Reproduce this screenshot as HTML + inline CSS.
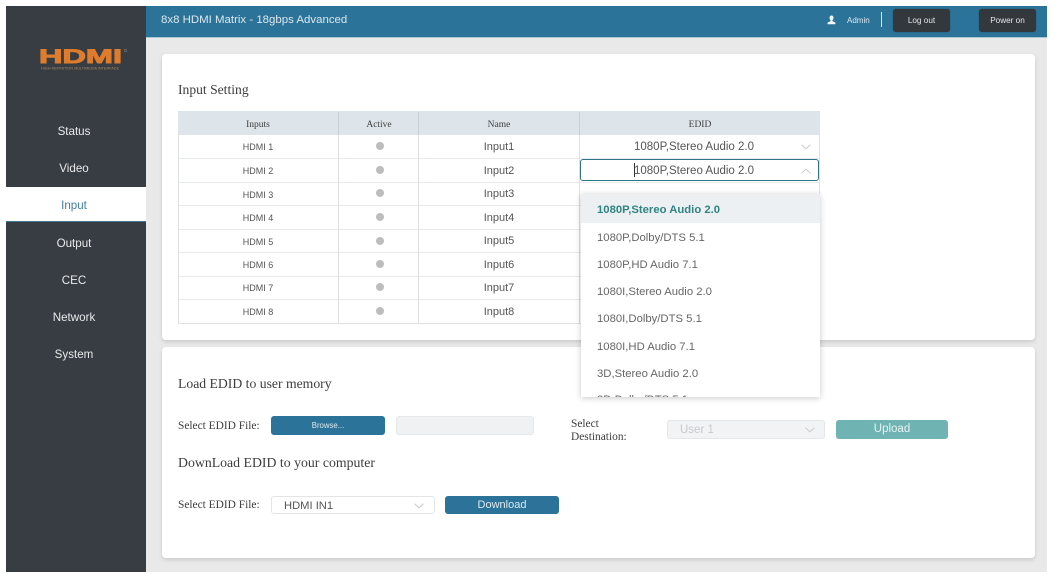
<!DOCTYPE html>
<html lang="en">
<head>
<meta charset="utf-8">
<title>8x8 HDMI Matrix</title>
<style>
html,body{margin:0;padding:0;background:#fff;}
body{width:1055px;height:575px;position:relative;overflow:hidden;font-family:"Liberation Sans",sans-serif;color:#555;filter:blur(.3px);}
.a{position:absolute;}
.t{position:absolute;white-space:nowrap;}
.c{text-align:center;}
.serif{font-family:"Liberation Serif",serif;color:#3d3d3d;}
.nav{position:absolute;left:6px;width:136px;text-align:center;color:#e8eaeb;font-size:11.6px;line-height:16px;}
.panel{position:absolute;background:#fff;border-radius:4px;box-shadow:0 2px 4px rgba(0,0,0,.13);}
.hl{position:absolute;left:178px;width:642px;height:1px;background:#e8eaeb;}
.vl{position:absolute;top:135px;width:1px;height:188px;background:#dde0e2;}
.dot{position:absolute;left:375.500px;width:8px;height:8px;border-radius:50%;background:#bdbdbd;}
.btn{position:absolute;border-radius:3px;text-align:center;}
.dark{background:#33383d;color:#e5e7e8;font-size:8.200px;top:9px;height:23px;line-height:24px;box-shadow:0 0 1px rgba(0,0,0,.4);}
.blue{background:#2b7399;color:#dfe9ef;}
.opt{position:absolute;left:597px;font-size:11.300px;line-height:14px;color:#666;white-space:nowrap;}
.lab{font-size:9px;line-height:12px;}
.inp{font-size:11px;line-height:15px;}
svg{position:absolute;overflow:visible;}
</style>
</head>
<body>
<div class="a" style="left:146px;top:6px;width:901px;height:566px;background:#e9e9ea;"></div>

<div class="a" style="left:6px;top:6px;width:140px;height:566px;background:#373d42;"></div>
<svg style="left:0;top:0;" width="146" height="80">
  <text x="39" y="63" font-family="Liberation Sans,sans-serif" font-weight="bold" font-size="19" fill="#dd7c2c" stroke="#dd7c2c" stroke-width=".9" textLength="83" lengthAdjust="spacingAndGlyphs">HDMI</text>
  <text x="41" y="69.500" font-family="Liberation Sans,sans-serif" font-size="3.600" fill="#a98a68" textLength="78" lengthAdjust="spacingAndGlyphs">HIGH-DEFINITION MULTIMEDIA INTERFACE</text>
  <circle cx="125.500" cy="50.500" r="1.400" fill="none" stroke="#8b8578" stroke-width=".5"/>
</svg>

<div class="nav" style="top:124px;">Status</div>
<div class="nav" style="top:161px;">Video</div>
<div class="a" style="left:6px;top:187px;width:140px;height:34px;background:#fff;border-bottom:1px solid #3f7690;"></div>
<div class="nav" style="top:198px;color:#3f7f9e;">Input</div>
<div class="nav" style="top:236px;">Output</div>
<div class="nav" style="top:273px;">CEC</div>
<div class="nav" style="top:310px;">Network</div>
<div class="nav" style="top:347px;">System</div>

<div class="a" style="left:146px;top:6px;width:901px;height:31px;background:#2b7399;border-bottom:1px solid #a9c8d6;"></div>
<div class="t" style="left:161px;top:12px;font-size:11.450px;line-height:16px;color:#dce8ee;">8x8 HDMI Matrix - 18gbps Advanced</div>
<svg style="left:827px;top:15px;" width="9" height="10" viewBox="0 0 9 10">
  <path d="M4.500 0.500c1.400 0 2 1 2 2.300 0 1.100-.5 2-1.100 2.500v.8l3 1.400v1.700H.6V7.500l3-1.400v-.8C3 4.800 2.500 3.900 2.500 2.800c0-1.300.6-2.300 2-2.300z" fill="#f2f5f7"/>
</svg>
<div class="t" style="left:847px;top:15px;font-size:8px;line-height:11px;color:#dce8ee;">Admin</div>
<div class="a" style="left:881px;top:12px;width:1px;height:15px;background:#dbe7ed;"></div>
<div class="btn dark" style="left:893px;width:57px;">Log out</div>
<div class="btn dark" style="left:979px;width:57px;">Power on</div>

<div class="panel" style="left:162px;top:54px;width:873px;height:286px;"></div>
<div class="panel" style="left:162px;top:347px;width:873px;height:211px;"></div>

<div class="t serif" style="left:178px;top:81px;font-size:13.600px;line-height:17px;">Input Setting</div>

<div class="a" style="left:178px;top:111px;width:642px;height:24px;background:#dde5ea;"></div>
<div class="a" style="left:338px;top:112px;width:1px;height:23px;background:#c9d0d5;"></div>
<div class="a" style="left:418px;top:112px;width:1px;height:23px;background:#c9d0d5;"></div>
<div class="a" style="left:579px;top:112px;width:1px;height:23px;background:#c9d0d5;"></div>
<div class="t serif c" style="left:178px;width:160px;top:119px;font-size:9.500px;line-height:12px;">Inputs</div>
<div class="t serif c" style="left:339px;width:80px;top:119px;font-size:9.500px;line-height:12px;">Active</div>
<div class="t serif c" style="left:419px;width:160px;top:119px;font-size:9.500px;line-height:12px;">Name</div>
<div class="t serif c" style="left:580px;width:240px;top:119px;font-size:9.500px;line-height:12px;">EDID</div>

<div class="hl" style="top:158px;"></div>
<div class="hl" style="top:182px;"></div>
<div class="hl" style="top:205px;"></div>
<div class="hl" style="top:229px;"></div>
<div class="hl" style="top:252px;"></div>
<div class="hl" style="top:276px;"></div>
<div class="hl" style="top:299px;"></div>
<div class="hl" style="top:323px;background:#dfe1e3;"></div>
<div class="vl" style="left:178px;"></div>
<div class="vl" style="left:338px;"></div>
<div class="vl" style="left:418px;"></div>
<div class="vl" style="left:579px;"></div>
<div class="vl" style="left:819px;"></div>

<div class="t c lab" style="left:178px;width:160px;top:141px;">HDMI 1</div>
<div class="t c lab" style="left:178px;width:160px;top:165px;">HDMI 2</div>
<div class="t c lab" style="left:178px;width:160px;top:189px;">HDMI 3</div>
<div class="t c lab" style="left:178px;width:160px;top:212px;">HDMI 4</div>
<div class="t c lab" style="left:178px;width:160px;top:236px;">HDMI 5</div>
<div class="t c lab" style="left:178px;width:160px;top:259px;">HDMI 6</div>
<div class="t c lab" style="left:178px;width:160px;top:282px;">HDMI 7</div>
<div class="t c lab" style="left:178px;width:160px;top:306px;">HDMI 8</div>

<div class="dot" style="top:142px;"></div>
<div class="dot" style="top:166px;"></div>
<div class="dot" style="top:189px;"></div>
<div class="dot" style="top:213px;"></div>
<div class="dot" style="top:237px;"></div>
<div class="dot" style="top:260px;"></div>
<div class="dot" style="top:283px;"></div>
<div class="dot" style="top:307px;"></div>

<div class="t c inp" style="left:419px;width:160px;top:140px;">Input1</div>
<div class="t c inp" style="left:419px;width:160px;top:164px;">Input2</div>
<div class="t c inp" style="left:419px;width:160px;top:187px;">Input3</div>
<div class="t c inp" style="left:419px;width:160px;top:211px;">Input4</div>
<div class="t c inp" style="left:419px;width:160px;top:234px;">Input5</div>
<div class="t c inp" style="left:419px;width:160px;top:258px;">Input6</div>
<div class="t c inp" style="left:419px;width:160px;top:281px;">Input7</div>
<div class="t c inp" style="left:419px;width:160px;top:305px;">Input8</div>

<div class="t" style="left:634px;top:140px;font-size:11.500px;line-height:15px;">1080P,Stereo Audio 2.0</div>
<svg style="left:801px;top:144px;" width="10" height="6" viewBox="0 0 10 6"><path d="M.5.800 5 4.800 9.500.800" fill="none" stroke="#c9cdd0" stroke-width="1"/></svg>

<div class="a" style="left:580px;top:159px;width:239px;height:22px;box-sizing:border-box;border:1px solid #2f7485;border-radius:3px;background:#fff;"></div>
<div class="a" style="left:634px;top:163px;width:1px;height:14px;background:#333;"></div>
<div class="t" style="left:634px;top:164px;font-size:11.500px;line-height:15px;">1080P,Stereo Audio 2.0</div>
<svg style="left:801px;top:168px;" width="10" height="6" viewBox="0 0 10 6"><path d="M.5 5.200 5 1.200 9.500 5.200" fill="none" stroke="#c9cdd0" stroke-width="1"/></svg>

<div class="a" style="left:581px;top:194px;width:239px;height:203px;background:#fff;box-shadow:0 1px 6px rgba(0,0,0,.22);overflow:hidden;">
  <div class="a" style="left:0;top:0;width:239px;height:29px;background:#edf0f2;"></div>
</div>
<div class="t" style="left:597px;top:203px;font-size:11.300px;line-height:14px;font-weight:bold;color:#2f8480;">1080P,Stereo Audio 2.0</div>
<div class="opt" style="top:231px;">1080P,Dolby/DTS 5.1</div>
<div class="opt" style="top:258px;">1080P,HD Audio 7.1</div>
<div class="opt" style="top:285px;">1080I,Stereo Audio 2.0</div>
<div class="opt" style="top:312px;">1080I,Dolby/DTS 5.1</div>
<div class="opt" style="top:340px;">1080I,HD Audio 7.1</div>
<div class="opt" style="top:367px;">3D,Stereo Audio 2.0</div>
<div class="a" style="left:581px;top:393px;width:238px;height:4px;overflow:hidden;">
  <div class="t" style="left:16px;top:0;font-size:11.300px;line-height:14px;color:#666;">3D,Dolby/DTS 5.1</div>
</div>

<div class="t serif" style="left:178px;top:375px;font-size:13.700px;line-height:17px;">Load EDID to user memory</div>
<div class="t serif" style="left:178px;top:419px;font-size:11.400px;line-height:15px;">Select EDID File:</div>
<div class="btn blue" style="left:271px;top:416px;width:114px;height:19px;line-height:20px;font-size:7.800px;">Browse...</div>
<div class="a" style="left:396px;top:416px;width:138px;height:19px;background:#eff1f3;border:1px solid #e6e8ea;box-sizing:border-box;border-radius:3px;"></div>

<div class="t serif" style="left:571px;top:418px;font-size:11.400px;line-height:13px;">Select<br>Destination:</div>
<div class="a" style="left:667px;top:420px;width:158px;height:19px;background:#f1f3f5;border:1px solid #e4e7ea;box-sizing:border-box;border-radius:3px;"></div>
<div class="t" style="left:680px;top:423px;font-size:11.500px;line-height:15px;color:#c6cbcf;">User 1</div>
<svg style="left:805px;top:427px;" width="10" height="6" viewBox="0 0 10 6"><path d="M.5.800 5 4.800 9.500.800" fill="none" stroke="#c9cdd0" stroke-width="1"/></svg>
<div class="btn" style="left:836px;top:420px;width:112px;height:19px;line-height:19px;font-size:11.500px;background:#6fb3b3;color:#e6f2f2;">Upload</div>

<div class="t serif" style="left:178px;top:454px;font-size:13.800px;line-height:17px;">DownLoad EDID to your computer</div>
<div class="t serif" style="left:178px;top:498px;font-size:11.400px;line-height:15px;">Select EDID File:</div>
<div class="a" style="left:271px;top:496px;width:164px;height:18px;background:#fff;border:1px solid #e2e5e8;box-sizing:border-box;border-radius:3px;"></div>
<div class="t" style="left:284px;top:499px;font-size:11.200px;line-height:15px;">HDMI IN1</div>
<svg style="left:414px;top:503px;" width="10" height="6" viewBox="0 0 10 6"><path d="M.5.800 5 4.800 9.500.800" fill="none" stroke="#c9cdd0" stroke-width="1"/></svg>
<div class="btn blue" style="left:445px;top:496px;width:114px;height:18px;line-height:18px;font-size:11px;">Download</div>
</body>
</html>
